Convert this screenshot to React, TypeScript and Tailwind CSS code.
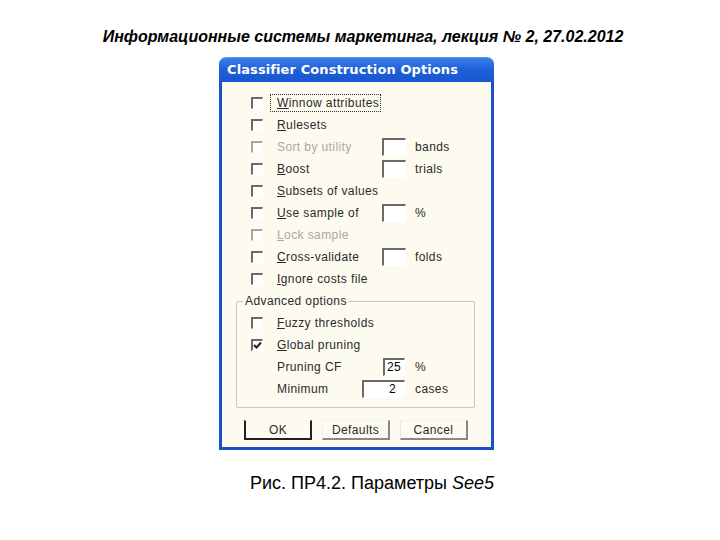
import React from "react";

const CB = ({ checked = false, disabled = false }: { checked?: boolean; disabled?: boolean }) => (
  <div
    className={`w-[12px] h-[12px] shrink-0 border-t-[2px] border-l-[2px] border-r border-b bg-white flex items-center justify-center ${
      disabled ? "border-t-[#a8a8a0] border-l-[#a8a8a0] border-r-white border-b-white" : "border-t-[#6a6a6a] border-l-[#6a6a6a] border-r-white border-b-white"
    }`}
  >
    {checked && (
      <svg width="9" height="9" viewBox="0 0 9 9">
        <path d="M1 4 L3.5 6.5 L8 1.5" stroke="#222" strokeWidth="2" fill="none" />
      </svg>
    )}
  </div>
);

const Box = ({ w, value = "", align = "left" }: { w: string; value?: string; align?: string }) => (
  <div
    className={`${w} h-[18px] shrink-0 border-t-[2px] border-l-[2px] border-t-[#6a6a6a] border-l-[#6a6a6a] border-r border-b border-r-white border-b-white bg-white text-[12px] leading-[14px] px-[2px] ${
      align === "right" ? "text-right pr-[8px]" : "text-left"
    }`}
  >
    {value}
  </div>
);

const Row = ({
  u,
  rest,
  disabled = false,
  checked = false,
  box,
  suffix,
  focus = false,
}: {
  u: string;
  rest: string;
  disabled?: boolean;
  checked?: boolean;
  box?: boolean;
  suffix?: string;
  focus?: boolean;
}) => (
  <div className="h-[22px] flex items-center">
    <CB disabled={disabled} checked={checked} />
    <div className={`ml-[14px] w-[105px] shrink-0 whitespace-nowrap ${disabled ? "text-[#a8a8a0]" : "text-[#2a2a2a]"}`}>
      <span className={focus ? "outline outline-1 outline-dotted outline-[#333] outline-offset-[1px] ml-[-5px] pl-[5px]" : ""}>
        <span className="underline">{u}</span>
        {rest}
      </span>
    </div>
    {box && <Box w="w-[24px]" />}
    {suffix && <div className="ml-[9px] text-[#2a2a2a]">{suffix}</div>}
  </div>
);

export default function App() {
  return (
    <div className="w-[720px] h-[540px] bg-white flex flex-col" style={{ fontFamily: '"Liberation Sans", Arial, sans-serif' }}>
      <div className="pt-[28px] h-[46px] text-center italic font-bold text-[16px] leading-[18px] text-black pl-[6px]">
        Информационные системы маркетинга, лекция № 2, 27.02.2012
      </div>
      <div className="pl-[219px] pt-[11px]">
        <div className="w-[275px] h-[393px] flex flex-col">
          <div className="h-[25px] rounded-t-[7px] bg-gradient-to-b from-[#3a80ec] via-[#1e5fd6] to-[#1756cf] flex items-center pl-[8px] border-t border-[#5b96f0]">
            <span className="text-white font-bold text-[13px] tracking-[0.1px]" style={{ fontFamily: '"DejaVu Sans", Verdana, sans-serif' }}>
              Classifier Construction Options
            </span>
          </div>
          <div className="flex-1 border-l-[3px] border-r-[3px] border-b-[3px] border-[#1a4fc8] bg-[#fdfbf0] pt-[10px] pl-[29px] text-[12px] leading-[14px] tracking-[0.4px]">
            <Row u="W" rest="innow attributes" focus />
            <Row u="R" rest="ulesets" />
            <Row u="" rest="Sort by utility" disabled box suffix="bands" />
            <Row u="B" rest="oost" box suffix="trials" />
            <Row u="S" rest="ubsets of values" />
            <Row u="U" rest="se sample of" box suffix="%" />
            <Row u="L" rest="ock sample" disabled />
            <Row u="C" rest="ross-validate" box suffix="folds" />
            <Row u="I" rest="gnore costs file" />
            <div className="ml-[-15px] mt-[11px] w-[239px] h-[107px] border border-[#c8c8b8] rounded-[2px] relative pt-[10px] pl-[14px]">
              <div className="absolute top-[-8px] left-[6px] bg-[#fdfbf0] px-[2px] text-[#2a2a2a]">Advanced options</div>
              <Row u="F" rest="uzzy thresholds" />
              <Row u="G" rest="lobal pruning" checked />
              <div className="h-[22px] flex items-center">
                <div className="ml-[26px] w-[106px] text-[#2a2a2a]">Pruning CF</div>
                <Box w="w-[22px]" value="25" />
                <div className="ml-[10px] text-[#2a2a2a]">%</div>
              </div>
              <div className="h-[22px] flex items-center">
                <div className="ml-[26px] w-[85px] text-[#2a2a2a]">Minimum</div>
                <Box w="w-[43px]" value="2" align="right" />
                <div className="ml-[10px] text-[#2a2a2a]">cases</div>
              </div>
            </div>
            <div className="flex mt-[12px] ml-[-7px] gap-[10px]">
              <div className="w-[68px] h-[20px] border-l-[2px] border-r-[2px] border-b-[2px] border-t border-l-[#222] border-r-[#222] border-b-[#222] border-t-[#f4f4f4] flex items-center justify-center text-[#2a2a2a]">
                OK
              </div>
              <div className="w-[68px] h-[20px] border-r-[2px] border-b-[2px] border-r-[#888] border-b-[#888] border-l border-t border-l-[#f0f0f0] border-t-[#f0f0f0] flex items-center justify-center text-[#2a2a2a]">
                Defaults
              </div>
              <div className="w-[68px] h-[20px] border-r-[2px] border-b-[2px] border-r-[#888] border-b-[#888] border-l border-t border-l-[#e8e8e8] border-t-[#f0f0f0] flex items-center justify-center text-[#2a2a2a]">
                Cancel
              </div>
            </div>
          </div>
        </div>
      </div>
      <div className="pl-[250px] pt-[22px] text-[18px] leading-[22px] text-black">
        Рис. ПР4.2. Параметры <span className="italic">See5</span>
      </div>
    </div>
  );
}
